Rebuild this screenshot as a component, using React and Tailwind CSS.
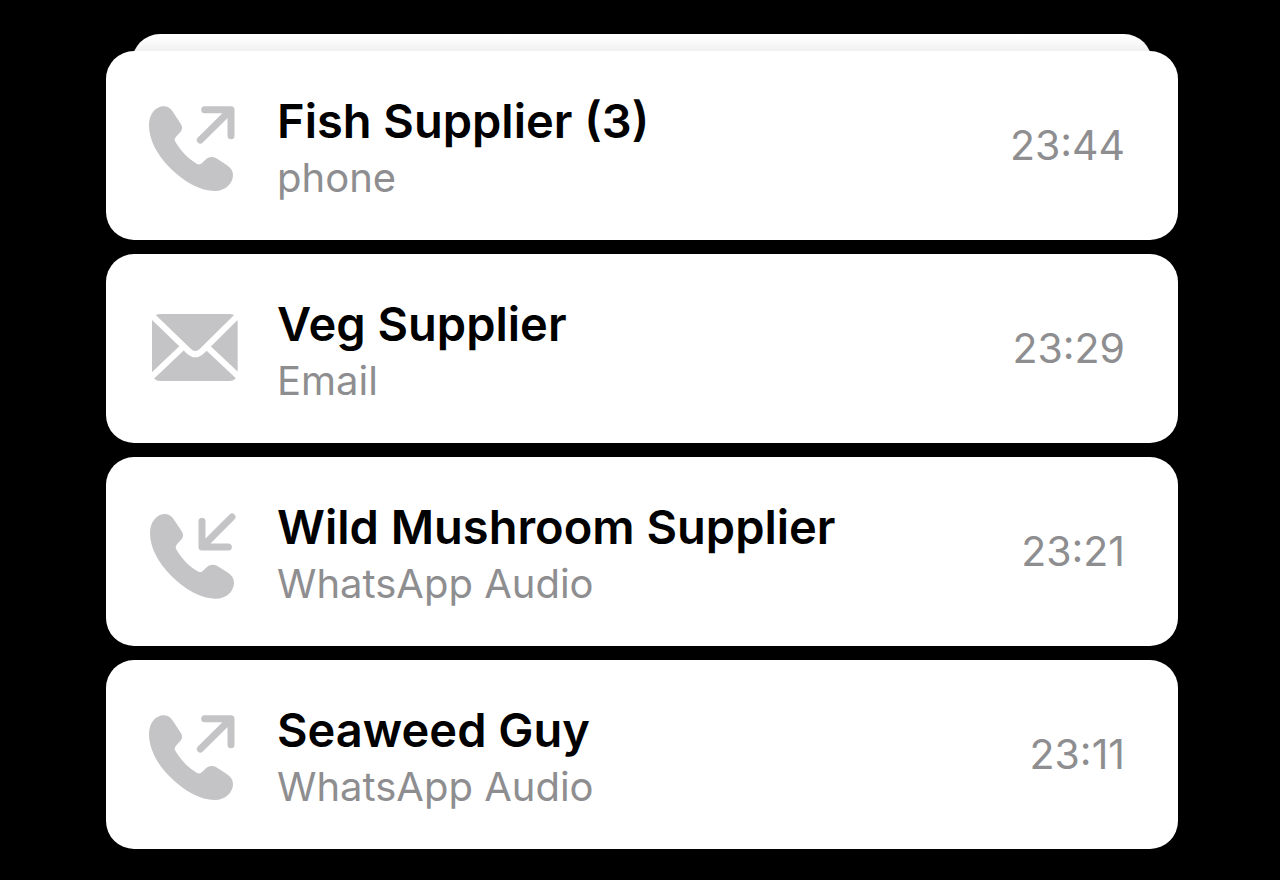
const OutgoingCallIcon = () => (
    <svg viewBox="45 21 291 291" className="size-[97px]" aria-hidden="true">
        <path
            fill="#c4c4c6"
            d="M57 106C57 72 77 49 101 49C112 49 121 54 127 63L152 101C159 111 157 120 149 128L138 140C133 146 133 151 137 157C154 186 177 208 200 221C206 225 211 224 216 219L228 208C237 200 248 199 259 205L289 224C302 232 309 242 309 255C309 278 289 303 254 303C213 303 164 278 121 235C79 193 57 147 57 106Z"
        />
        <path fill="none" stroke="#c4c4c6" strokeWidth="21" strokeLinecap="round" strokeLinejoin="round" d="M224 59H303V137M299 63L211 150" />
    </svg>
);

const IncomingCallIcon = () => (
    <svg viewBox="45 24 291 291" className="size-[97px]" aria-hidden="true">
        <path
            fill="#c4c4c6"
            d="M60 115C60 81 80 57 104 57C115 57 124 62 130 71L155 109C162 119 160 128 152 136L141 148C136 154 136 159 140 165C157 194 180 216 203 229C209 233 214 232 219 227L231 216C240 208 251 207 262 213L292 232C305 240 312 250 312 263C312 286 292 311 257 311C216 311 167 286 124 243C82 201 60 155 60 115Z"
        />
        <path fill="none" stroke="#c4c4c6" strokeWidth="21" strokeLinecap="round" strokeLinejoin="round" d="M216 79V156H295M219 153L306 66" />
    </svg>
);

const MailIcon = () => (
    <svg viewBox="45 15 291 291" className="size-[97px]" aria-hidden="true">
        <rect x="66" y="57" width="257" height="201" rx="24" fill="#c4c4c6" />
        <path
            fill="none"
            stroke="#fff"
            strokeWidth="18"
            d="M64 60L176 168Q196 187 216 168L327 58M64 246L162 153M327 246L228 153"
        />
    </svg>
);

const calls = [
    { name: 'Fish Supplier (3)', source: 'phone', time: '23:44', icon: OutgoingCallIcon },
    { name: 'Veg Supplier', source: 'Email', time: '23:29', icon: MailIcon },
    { name: 'Wild Mushroom Supplier', source: 'WhatsApp Audio', time: '23:21', icon: IncomingCallIcon },
    { name: 'Seaweed Guy', source: 'WhatsApp Audio', time: '23:11', icon: OutgoingCallIcon }
];

function CallCard({ call }) {
    const IconComponent = call.icon;

    return (
        <li className="flex items-center rounded-[28px] bg-white py-[34px] pl-[39px] pr-[53px]">
            <div className="flex-shrink-0">
                <IconComponent />
            </div>
            <div className="flex-1 min-w-0 ml-[35px] pt-[7px]">
                <h2 className="text-[47px] leading-[57px] font-semibold text-black">{call.name}</h2>
                <p className="text-[40px] leading-[57px] font-normal text-[#8e8e90]">{call.source}</p>
            </div>
            <time className="text-[41px] leading-[57px] font-normal text-[#8e8e90]">{call.time}</time>
        </li>
    );
}

export default function App() {
    return (
        <main className="min-h-screen bg-black pt-[34px] pb-[31px] pl-[106px] pr-[102px] font-['Inter',sans-serif]">
            {/* older notification peeking out behind the first card */}
            <div className="mx-[26px] h-[30px] -mb-[13px] rounded-t-[28px] bg-linear-to-b from-white from-10% to-[#e8e8e8] to-80%" />
            <ul className="relative flex flex-col gap-[14px]">
                {calls.map((call, index) => (
                    <CallCard key={index} call={call} />
                ))}
            </ul>
        </main>
    );
}
